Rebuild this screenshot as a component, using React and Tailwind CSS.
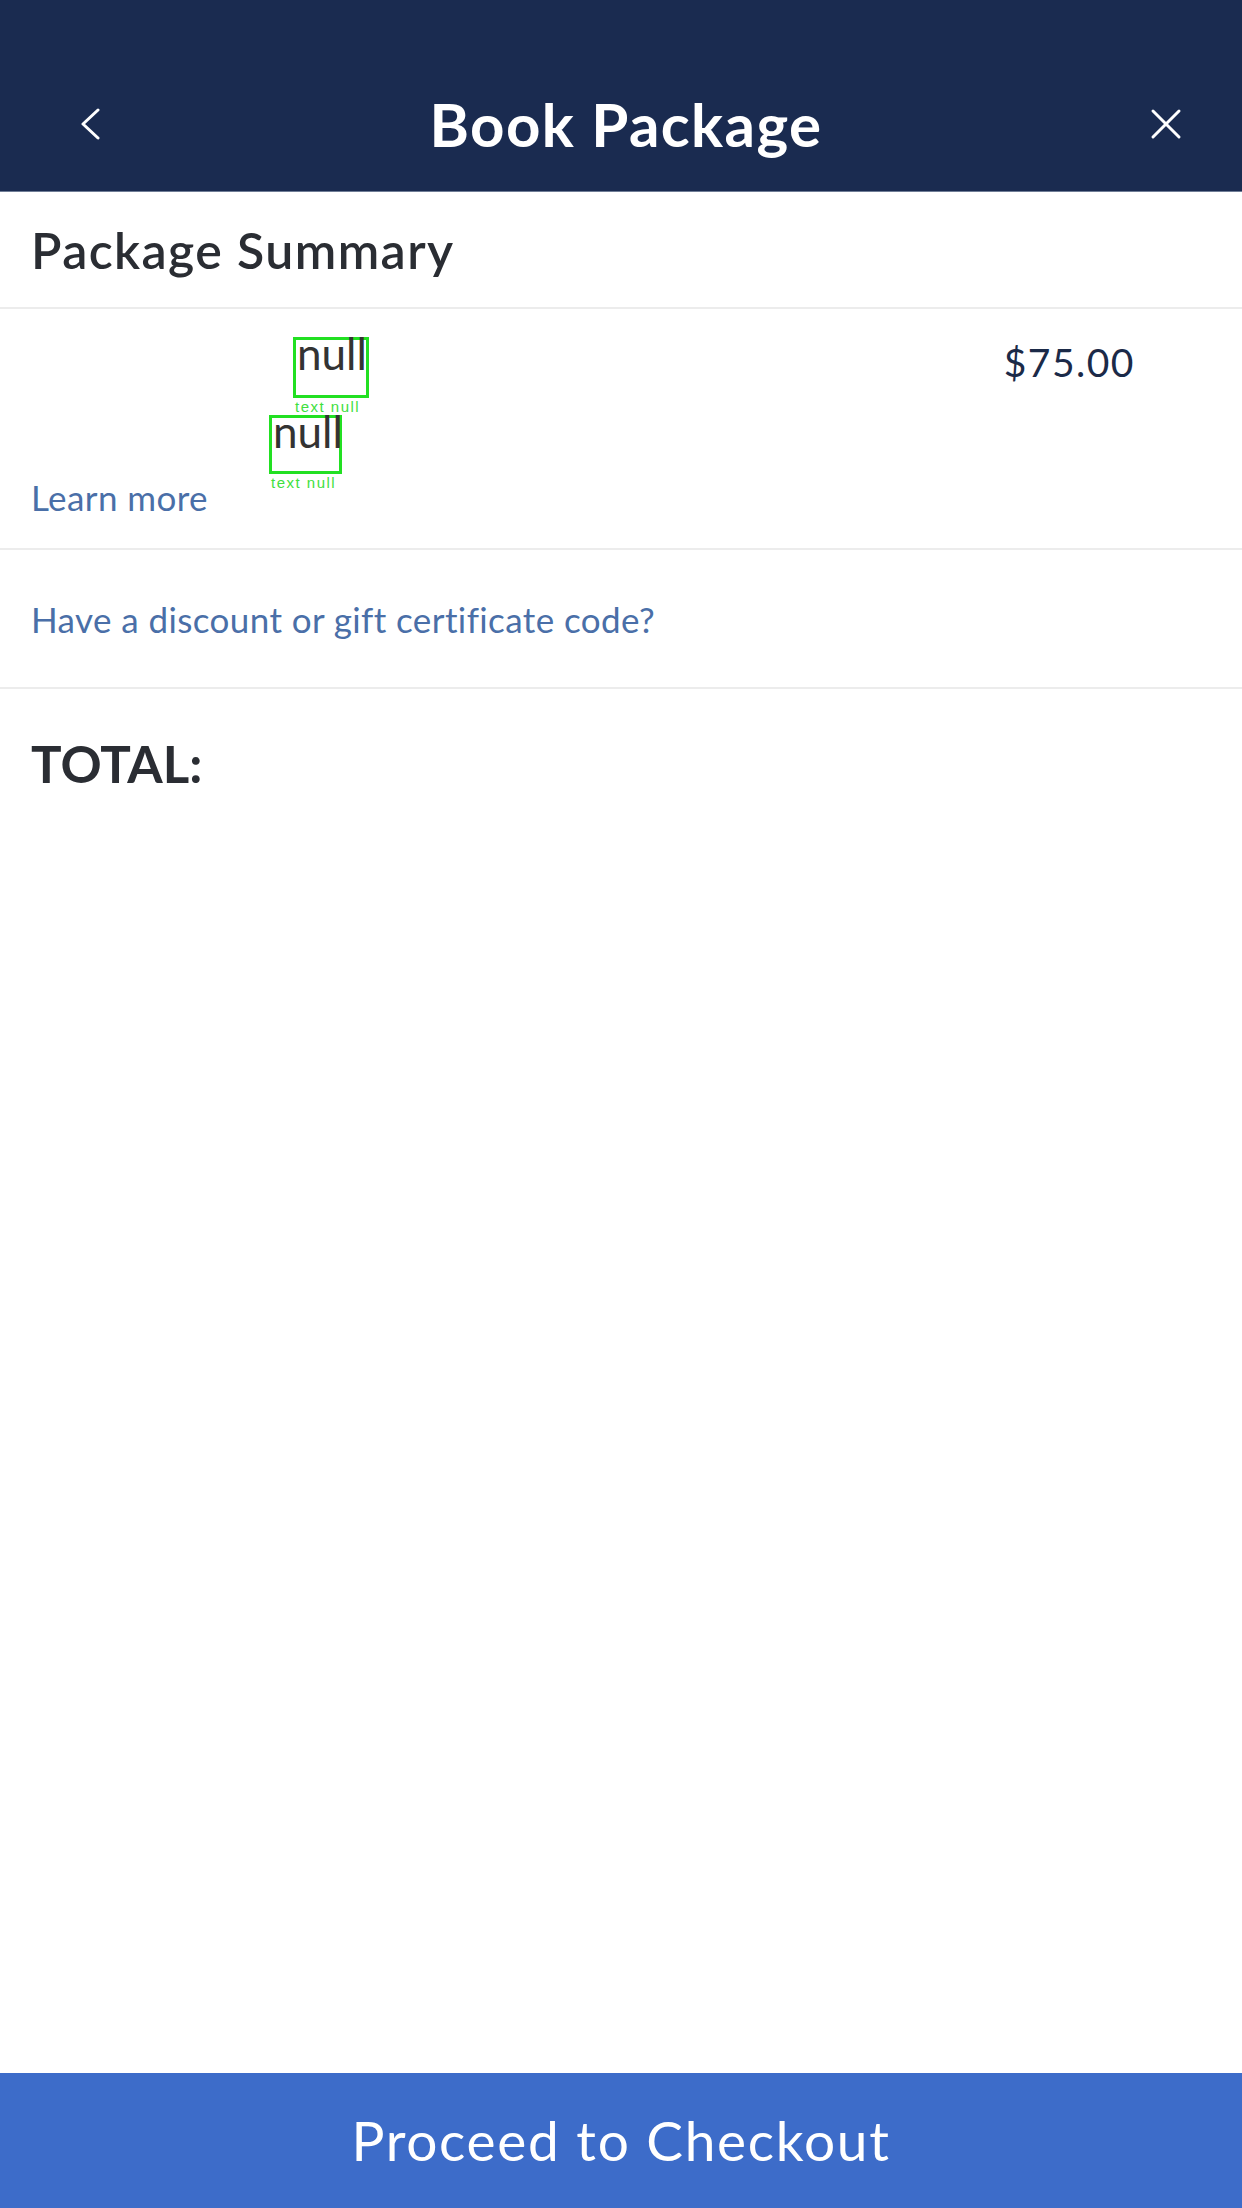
import React from "react";

function NullBox({ top, left, w, h }) {
  return (
    <>
      <div
        className="absolute border-[3px] border-[#22e022]"
        style={{ top, left, width: w, height: h }}
      >
        <span className="absolute left-[1px] top-[-3px] text-[44px] leading-[32px] text-[#333] font-['Lato',sans-serif]">
          null
        </span>
      </div>
      <div
        className="absolute text-[15px] leading-none text-[#3ee03e] font-['Liberation_Sans',sans-serif] tracking-[1.5px]"
        style={{ top: top + h + 1, left: left + 2 }}
      >
        text null
      </div>
    </>
  );
}

export default function App() {
  return (
    <div className="min-h-screen w-full flex flex-col bg-white font-['Lato','Open_Sans',sans-serif] text-[#2a2d33]">
      <header className="h-[192px] bg-[#1a2b50] flex flex-col border-b border-[#6f7d96]">
        <div className="h-[68px]" />
        <div className="h-[112px] flex items-center justify-between px-[76px] pr-[60px]">
          <svg width="24" height="32" viewBox="0 0 24 32" className="ml-[2px]">
            <polyline points="20,2 5,16 20,30" fill="none" stroke="white" strokeWidth="3" strokeLinecap="round" strokeLinejoin="round" />
          </svg>
          <h1 className="text-[60px] font-bold text-white leading-none tracking-[1.4px]">Book Package</h1>
          <svg width="32" height="32" viewBox="0 0 32 32">
            <line x1="3" y1="3" x2="29" y2="29" stroke="white" strokeWidth="3" strokeLinecap="round" />
            <line x1="29" y1="3" x2="3" y2="29" stroke="white" strokeWidth="3" strokeLinecap="round" />
          </svg>
        </div>
      </header>

      <main className="flex-1 flex flex-col">
        <div className="h-[117px] flex items-center px-[31px] border-b-2 border-[#ececec]">
          <h2 className="text-[50px] font-semibold leading-none text-[#2a2d33] tracking-[1.4px]">Package Summary</h2>
        </div>

        <div className="relative pt-[30px] pb-[30px] pl-[31px] pr-[107px] flex justify-between border-b-2 border-[#ececec]">
          <div className="flex flex-col">
            <div className="h-[137px]" />
            <span className="text-[35px] leading-[1.2] text-[#4a6fa8] tracking-[0.4px]">Learn more</span>
          </div>
          <span className="text-[39px] leading-[1.2] text-[#1b2a48] tracking-[1.5px]">$75.00</span>
          <NullBox top={28} left={293} w={76} h={61} />
          <NullBox top={106} left={269} w={73} h={59} />
        </div>

        <div className="h-[139px] flex items-center px-[31px] border-b-2 border-[#ececec]">
          <span className="text-[35px] leading-[1.2] text-[#4a6fa8] tracking-[0.4px]">Have a discount or gift certificate code?</span>
        </div>

        <div className="pt-[44px] px-[31px]">
          <span className="text-[51px] font-bold leading-[1.2] text-[#2a2d33]">TOTAL:</span>
        </div>
      </main>

      <button className="h-[135px] w-full bg-[#3d6cc9] flex items-center justify-center text-white text-[55px] leading-none font-normal tracking-[1.7px]">
        Proceed to Checkout
      </button>
    </div>
  );
}
